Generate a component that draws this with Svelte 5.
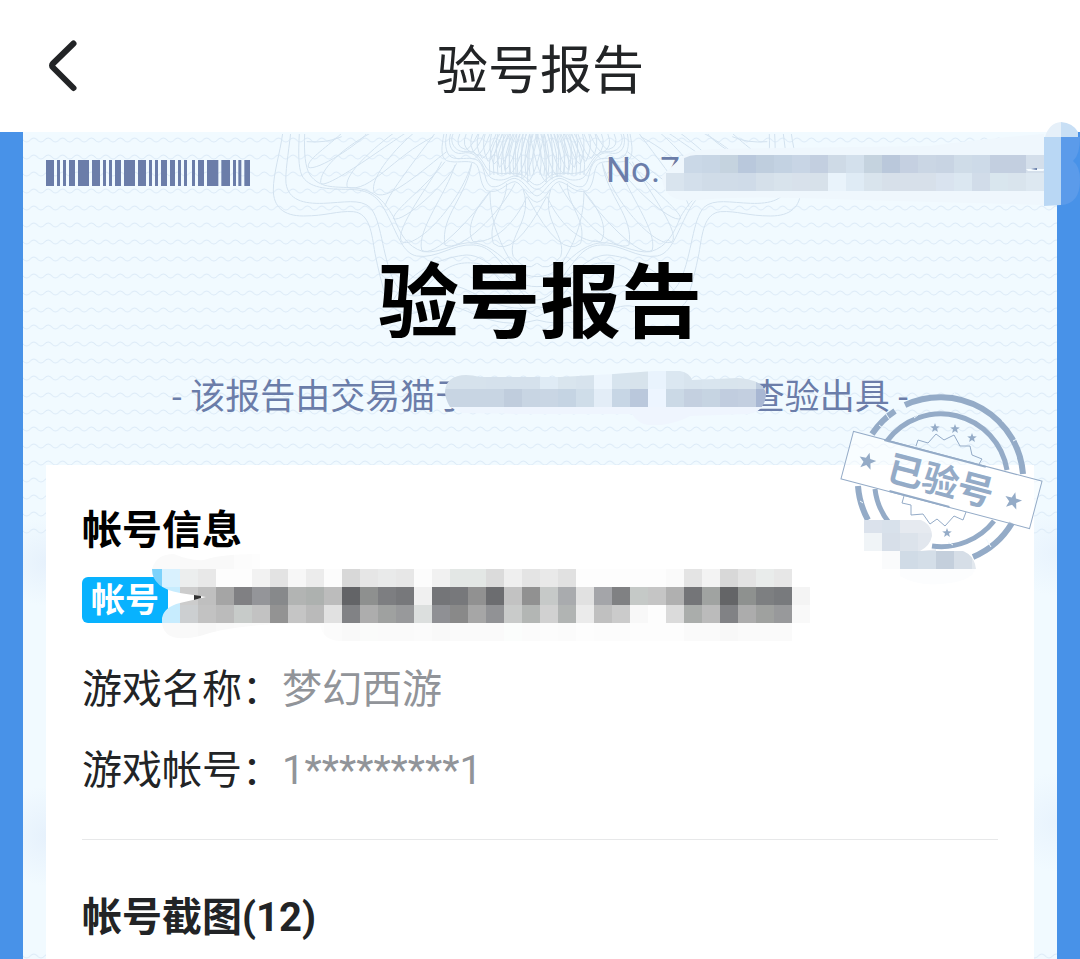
<script>
  const rows = [
    { label: '游戏名称：', value: '梦幻西游' },
    { label: '游戏帐号：', value: '1*********1' }
  ];
  const screenshotCount = 12;

  // [start, end] of each bar
  const bars = [
    [138, 162], [171, 180], [189, 198], [207, 225], [234, 267], [276, 300],
    [309, 318], [327, 336], [345, 363], [372, 405], [414, 438], [447, 456],
    [465, 474], [483, 501], [510, 525], [534, 543], [552, 561], [576, 585],
    [594, 612], [621, 655], [664, 690], [699, 708], [715, 724], [733, 750]
  ];

  // each mosaic row: first x, top y, height, then one colour per 18px cell
  const serialMosaic = [
    { x: 684, y: 155, h: 18, c: 'cad8e7 c8d6e5 c5d3df b9c8dc bfcede c3d2e2 c8d5e5 c3cfe0 cedae6 d3e0ec c5d3df bac8db c5d0e1 cad6e4 c8d4e3 cfdce8 cddae8 c3cfe0 c3cfe0 d4dfeb' },
    { x: 666, y: 173, h: 18, c: 'd9e4ee d3dfeb d0dce8 d0dce8 cfdbe8 d5e0ea d8e3ec d8e1eb d7e1ea e9f3fb dfebf5 d9e4ed d7e0ea d7e0ea d7e0ea d9e3ef dbe7f1 d1dce9 d9e6ee d9e4ed dde8f1' }
  ];
  const dateMosaic = [
    { x: 432, y: 371, h: 18, c: 'd6e2ec d6e2ec d6e2ec d5e1ec d5e1ec d5e1ec dfebf5 d9e5ee d7e3ed ecf5fd d7e4ee d7e3ec e9f3fd dbe7f1 d8e4ee d9e5ef d8e4ed d9e4ed c0cee0' },
    { x: 432, y: 389, h: 18, c: 'c8d5e3 c8d5e3 c8d5e3 c8d5e3 c0cddd c8d5e3 c9d6e4 c5d4e3 cfdde9 e3edf7 c7d6e5 bac8dc edf5ff cbd9e6 c4d0e0 c6d4e2 c1cddf c3cfe0 a8b7d3' },
    { x: 432, y: 407, h: 18, c: 'eff6fe eff6fe eff6fe eff6fe eff5fe eff5fe eff5fe eff5fe eff5fe eff5fe eff5fe eff5fe eff5fe eff5fe eff5fe eff5fe eff5fe eff5fe eff5fe' }
  ];
  const nameMosaic = [
    { x: 144, y: 551, h: 18, c: 'fafafa fafafa f9f9f9 f9f9f9 f9f9f9 fcfcfc fdfdfd' },
    { x: 144, y: 569, h: 18, c: '7cd2fb d9f1fe eceeee e8e8e8 fdfdfd fdfdfd f2f2f2 e3e3e3 f7f7f7 ececec fcfcfc d8d8d8 e6e6e6 e9eaea e7e7e7 fcfcfc f1f1f1 e3e7e5 e3e7e5 dbdbdb efefef e4e4e4 e9e9e9 e1e1e1 fdfdfd fdfdfd fdfdfd fdfdfd fdfdfd fafafa e4e4e4 f3f3f3 d8d8d8 e3e3e3 e9eceb e7e7e7' },
    { x: 162, y: 587, h: 18, c: 'c7ecfe cccccc bfbfbf a5a5a5 808083 949599 87898b b2b4b3 adb1af bcbcbc 636467 8e908f 7d7e81 77787b f0f0f0 747578 77787b 919191 6c6d70 c2c2c2 919191 c6c9c8 a9abae e1e1e1 a4a5a9 808183 c5c9c7 c5c5c5 b0b0b0 747578 a0a3a1 646567 8e918f 7d7f81 787a7d f4f4f4' },
    { x: 162, y: 605, h: 18, c: 'c7ecfe cccfd1 c2c2c2 bbbbbb c7cbc9 c2c2c2 939393 c5c5c5 bababa e1e1e1 818285 adadad 9fa1a0 98999b dcdfde 8f9094 898989 a6a6a6 919295 c9cbca b3b6b4 d1d1d1 b1b4b3 ebebeb c0c0c0 cbcbcb f8f8f8 fdfdfd dbdbdb aaadab bbbbbb 818285 acacac 9fa19f 98999b f9f9f9' },
    { x: 162, y: 623, h: 18, c: 'f9f9f9 f9f9f9 f7f7f7 f9f9f9 fafafa fbfbfb fcfcfc fdfdfd fdfdfd fbfbfb f9f9f9 fafbfa fafafa fafafa fbfbfb f9f9f9 fafafa fafafa fafafa fbfdfc fbfbfb fcfcfc fbfbfb fdfdfd fcfcfc fcfcfc fdfdfd fdfdfd fdfdfd fafafa fafafa f8f8f8 fafafa fafafa fafafa' }
  ];
  const stampMosaic = [
    { x: 864, y: 520, h: 13, c: 'dbe2ec d8e1eb e6eaf0 e6eaf0' },
    { x: 864, y: 533, h: 18, c: 'f0f4f7 d7dfe9 dce3eb e2e7ee' },
    { x: 882, y: 551, h: 18, c: 'fafbfc d0dbe6 d4dee8 c4cfdc d6dee7 e2e8ee' }
  ];

  const steps = (n) => Array.from({ length: n }, (_, i) => i);

  function star(cx, cy, r) {
    return steps(10)
      .map((i) => {
        const a = (i * Math.PI) / 5 - Math.PI / 2;
        const d = i % 2 ? r * 0.42 : r;
        return `${(cx + d * Math.cos(a)).toFixed(1)},${(cy + d * Math.sin(a)).toFixed(1)}`;
      })
      .join(' ');
  }
</script>

{#snippet mosaic(lines)}
  {#each lines as line}
    {#each line.c.split(' ') as color, i}
      <rect x={line.x + i * 18} y={line.y} width="18" height={line.h} fill={'#' + color} shape-rendering="crispEdges" />
    {/each}
  {/each}
{/snippet}

<div class="page">
  <header class="topbar">
    <button class="back" type="button" aria-label="返回">
      <svg width="32" height="54" viewBox="0 0 32 54" aria-hidden="true">
        <path d="M27.500 4.500 7 24.500Q5 26.500 7 28.500L27.500 49" />
      </svg>
    </button>
    <h1>验号报告</h1>
  </header>

  <main class="report">
    <svg class="paper" aria-hidden="true">
      <defs>
        <pattern id="waves" width="14.4" height="17" patternUnits="userSpaceOnUse">
          <path d="M-7.200 8Q-3.600 4 0 8T7.200 8T14.400 8T21.600 8" />
        </pattern>
        <clipPath id="below-edge"><rect x="-300" y="2" width="600" height="270" /></clipPath>
      </defs>
      <rect y="2" width="100%" height="404" fill="url(#waves)" />
      <rect y="812" width="100%" height="100%" fill="url(#waves)" />
      <svg x="50%" overflow="visible">
        <g clip-path="url(#below-edge)">
          <g class="rosette" transform="translate(-280 -12) scale(0.3333)">
            {#each ['', 'translate(1662 0) scale(-1 1)'] as flip}
              <g transform={flip}>
                <path d="M68 40C60 100 40 160 40 210S70 288 130 288C200 288 230 272 280 275C330 280 335 340 345 400C355 450 365 490 380 540C420 600 470 580 540 560S680 640 831 600" />
                <path d="M92 40C85 100 75 160 78 190C85 240 130 252 190 250C250 248 300 235 330 262C365 300 365 400 400 480C440 560 500 520 560 500S700 590 831 560" />
                <path d="M118 40C115 100 115 140 125 165C145 205 200 208 270 208C340 210 360 240 385 290C415 350 430 400 470 408C530 418 580 370 640 375C690 378 710 410 760 480Q790 540 831 540" />
                <path d="M134 40C132 100 135 140 150 165C180 205 220 200 270 203C340 205 370 240 400 290C420 340 440 380 490 395C540 402 590 365 640 368C700 376 730 420 770 450Q800 470 831 470" />
                <path d="M400 540C460 440 560 410 620 405C690 405 740 500 831 500" />
                <path d="M500 500C560 430 600 425 650 430C720 440 750 560 831 590" />
                <path d="M245 40C190 90 140 120 145 142C170 155 300 70 320 40" />
                <path d="M330 40C240 90 180 150 182 188C190 215 360 90 435 40" />
                <path d="M400 40C320 100 250 170 262 202C330 220 400 110 520 50" />
                <path d="M140 65Q200 70 245 50M460 40C390 100 330 180 342 215C370 260 500 140 560 95" />
                <path d="M525 40C450 140 380 230 375 260M555 125C500 200 400 270 400 296C430 310 560 190 590 130" />
                <path d="M545 125C520 180 400 330 425 365C470 390 600 250 635 130" />
                <path d="M585 135C560 220 470 330 485 390C520 420 640 290 690 215" />
                <path d="M635 130C620 230 540 290 555 375C600 400 720 280 765 190" />
                <path d="M690 215C630 280 620 340 640 365C720 370 780 280 800 230" />
                <path d="M740 190C740 260 680 300 700 370Q760 420 860 230M790 210C820 300 740 350 760 410Q800 460 830 430M690 215C690 300 720 380 770 450" />
                <path d="M552 40C545 80 540 110 560 122C590 132 620 118 645 130C665 145 655 190 680 212C720 225 740 185 765 185C790 190 800 240 831 247" />
                <path d="M560 40C552 80 560 108 580 114C610 120 630 108 655 122C680 145 670 190 695 200C725 205 740 175 765 175C795 180 810 225 831 228" />
                <path d="M572 40C560 80 580 104 605 100C640 92 650 110 665 130C685 170 690 178 715 180C740 182 750 168 765 168C800 170 810 208 831 208" />
                <path d="M580 40C565 70 590 98 615 94C650 90 665 120 680 145C695 165 740 160 765 160C800 160 810 195 831 195" />
                {#each steps(12) as i}
                  <path d="M{600 + i * 19} 40Q{582 + i * 20} 80 {616 + i * 17} {88 + i * 9}Q{630 + i * 18} {90 + i * 7} {655 + i * 18} 40" />
                  <path d="M{690 + i * 12} 165Q{680 + i * 12} 100 {720 + i * 10} 40" />
                {/each}
              </g>
            {/each}
          </g>
        </g>
      </svg>
    </svg>

    <div class="serial-row">
      <svg class="barcode" viewBox="138 480 612 78" aria-hidden="true">
        {#each bars as [from, to]}
          <rect x={from} y="480" width={to - from} height="78" />
        {/each}
      </svg>
      <div class="serial">
        No.7
        <svg class="smudge serial-smudge" viewBox="660 120 420 100" aria-hidden="true">
          <defs>
            <clipPath id="serial-shape">
              <path d="M666 173Q668 169 676 166Q684 155 696 155H1044V191H666Z" />
            </clipPath>
          </defs>
          <path d="M684 155Q694 150 712 149L930 146Q1000 137 1044 134V205L860 200Q740 195 700 200Q662 205 662 176Z" fill="#eff7fd" />
          <g clip-path="url(#serial-shape)">{@render mosaic(serialMosaic)}</g>
          <path d="M1026 169H1046L1043 171H1028Z" fill="#f5fbff" />
          <path d="M1031 169L1037 168V170Z" fill="#5e76a4" />
          <path d="M1044 137V206L1061 205V137Z" fill="#b9d7f4" />
          <path d="M1061 137H1080Q1080 155 1073 161Q1080 166 1080 180Q1080 204 1061 205Z" fill="#5b9bea" />
          <path d="M1045 137Q1049 123 1061 122V137Z" fill="#e6f0f9" />
          <path d="M1061 122Q1073 123 1078 132V137H1061Z" fill="#c8dff5" />
        </svg>
      </div>
    </div>

    <h2 class="title">验号报告</h2>

    <p class="issued">
      <span>- 该报告由交易猫于</span>
      <span>查验出具 -</span>
      <svg class="smudge date-smudge" viewBox="440 364 330 70" aria-hidden="true">
        <defs>
          <clipPath id="date-shape">
            <path d="M450 407Q440 390 450 380Q460 372 480 377L560 377L614 374Q640 372 655 371H680Q690 373 692 380L738 378Q766 380 766 396Q764 412 748 414L690 416Q680 422 662 425Q640 428 632 414H520L462 413Z" />
          </clipPath>
        </defs>
        <g clip-path="url(#date-shape)">{@render mosaic(dateMosaic)}</g>
      </svg>
    </p>

    <section class="card">
      <svg class="stamp" width="204" height="210" viewBox="840 380 204 210" aria-hidden="true">
        <g class="rings">
          <path d="M905 405A83 83 0 0 1 1023 474M1012 523A83 83 0 0 1 973 557M868 520A83 83 0 0 1 858 486M872 434A83 83 0 0 1 895 411" />
          <path class="thin" d="M887 441A67 67 0 0 1 1007 470M994 521A67 67 0 0 1 932 546M875 489A67 67 0 0 0 890 524" />
        </g>
        <path class="wear" d="M879 425L884 429M886 414L892 423M898 407L903 411M1002 421L1008 418M1013 441L1019 438M860 501L863 503M952 391L955 394M918 415L914 418M986 539L991 547M948 542L953 545" />
        <path class="frill" d="M916 446L918 440L928 443L936 434L944 440L954 435L960 446L970 446L972 455L982 459L979 464M904 496L902 503L911 505V515L923 514L930 524L937 519L945 526L954 516L963 520L966 512" />
        <polygon points={star(935, 428, 5)} />
        <polygon points={star(955, 429, 5)} />
        <polygon points={star(972, 438, 5)} />
        <polygon points={star(947, 533, 5)} />
        <g transform="rotate(14.8 941.500 480)">
          <rect class="banner" x="844" y="455.500" width="195" height="49" />
          <path class="band" d="M876 456H981M894 504H956" />
          <polygon points={star(865, 481, 9)} />
          <polygon points={star(1016, 482, 9)} />
          <text x="941" y="494" text-anchor="middle">已验号</text>
        </g>
      </svg>
      <svg class="smudge stamp-smudge" viewBox="860 512 120 76" aria-hidden="true">
        <defs>
          <clipPath id="stamp-shape">
            <path d="M864 520L905 517Q932 518 932 536Q930 546 920 551L948 548Q974 549 976 569H882V551H864Z" />
          </clipPath>
        </defs>
        <path d="M900 569H975Q972 580 950 583Q920 588 900 576Z" fill="#fcfdfe" />
        <g clip-path="url(#stamp-shape)">{@render mosaic(stampMosaic)}</g>
      </svg>

      <h3 class="account-title">帐号信息</h3>
      <div class="account">
        <span class="tag">帐号</span>
        <svg class="smudge name-smudge" viewBox="144 550 670 94" aria-hidden="true">
          <defs>
            <clipPath id="name-shape">
              <path d="M152 569Q156 554 174 554Q190 561 204 560Q220 554 260 554V569H792V587H810V623H792V641H342Q322 641 320 624Q240 622 200 636Q160 645 162 618Q164 607 180 603L206 597L180 593Q152 588 152 569Z" />
            </clipPath>
          </defs>
          <g clip-path="url(#name-shape)">{@render mosaic(nameMosaic)}</g>
          <path d="M194 595L201 596V598L194 600Z" fill="#333" />
        </svg>
      </div>

      <dl>
        {#each rows as row}
          <div class="row">
            <dt>{row.label}</dt>
            <dd>{row.value}</dd>
          </div>
        {/each}
      </dl>

      <h3 class="shots-title">帐号截图({screenshotCount})</h3>
    </section>
  </main>
</div>

<style>
  :global(body) {
    margin: 0;
    background: #4892e8;
  }

  .page {
    min-height: 100vh;
    display: flex;
    flex-direction: column;
    overflow-x: hidden;
    font-family: Roboto, "Noto Sans CJK SC", sans-serif;
    color: #222426;
  }

  h1, h2, h3, p, dl, dd {
    margin: 0;
  }

  .topbar {
    display: grid;
    grid-template-columns: 80px 1fr 80px;
    align-items: center;
    height: 132px;
    padding: 0 24px;
    box-sizing: border-box;
    background: #fff;
  }

  .topbar h1 {
    padding-top: 12px;
    text-align: center;
    font-size: 52px;
    line-height: 60px;
    font-weight: 400;
  }

  .back {
    display: flex;
    padding: 0 22px;
    border: none;
    background: none;
    cursor: pointer;
  }

  .back path {
    fill: none;
    stroke: #222426;
    stroke-width: 6;
    stroke-linecap: round;
  }

  .report {
    position: relative;
    flex: 1;
    display: flex;
    flex-direction: column;
    margin: 0 23px;
    padding: 28px 23px 0;
    background:
      radial-gradient(ellipse 50px 44px at 24px 430px, #e6f1fc, transparent),
      radial-gradient(ellipse 50px 50px at 24px 704px, #e6f1fc, transparent),
      radial-gradient(ellipse 50px 44px at 100% 420px, #e8f3fd, transparent),
      radial-gradient(ellipse 50px 50px at 100% 690px, #e8f3fd, transparent),
      #f1faff;
  }

  .paper {
    position: absolute;
    inset: 0;
    width: 100%;
    height: 100%;
  }

  .paper path {
    fill: none;
    stroke: #dceaf7;
    stroke-width: 1;
  }

  .paper .rosette path {
    stroke: #d3e2ef;
    stroke-width: 3;
  }

  .serial-row {
    position: relative;
    z-index: 1;
    display: flex;
    justify-content: space-between;
    height: 26px;
  }

  .barcode {
    width: 204px;
    height: 26px;
    fill: #6b7da9;
  }

  .serial {
    position: relative;
    width: 428px;
    font-size: 35px;
    line-height: 22px;
    color: #6b7da9;
  }

  .smudge {
    position: absolute;
    pointer-events: none;
  }

  .serial-smudge {
    top: -40px;
    right: -46px;
    width: 420px;
    height: 100px;
  }

  .title {
    position: relative;
    margin-top: 68px;
    text-align: center;
    font-size: 81px;
    line-height: 100px;
    font-weight: 700;
    color: #000;
  }

  .issued {
    position: relative;
    align-self: center;
    display: flex;
    justify-content: space-between;
    width: 736px;
    margin-top: 20px;
    font-size: 35px;
    line-height: 48px;
    color: #6b7da9;
  }

  .date-smudge {
    top: -10px;
    left: 268px;
    width: 330px;
    height: 70px;
  }

  .card {
    position: relative;
    flex: 1;
    margin-top: 43px;
    padding: 42px 36px 17px;
    background: #fff;
  }

  .stamp {
    position: absolute;
    top: -85px;
    right: -10px;
    fill: #94abc7;
  }

  .rings path {
    fill: none;
    stroke: #94abc7;
    stroke-width: 6;
  }

  .rings .thin {
    stroke-width: 5;
  }

  .wear {
    stroke: #f1faff;
    stroke-width: 1;
  }

  .frill {
    fill: none;
    stroke: #94abc7;
    stroke-width: 1;
  }

  .banner {
    fill: #fff;
    fill-opacity: 0.5;
    stroke: #94abc7;
    stroke-width: 1;
  }

  .band {
    stroke: #94abc7;
    stroke-width: 2;
  }

  .stamp text {
    font-size: 36px;
    font-weight: 700;
  }

  .stamp-smudge {
    top: 47px;
    right: 54px;
    width: 120px;
    height: 76px;
  }

  .account-title,
  .shots-title {
    font-size: 40px;
    line-height: 48px;
    font-weight: 700;
  }

  .account-title {
    color: #000;
  }

  .account {
    position: relative;
    display: flex;
    margin-top: 22px;
  }

  .tag {
    width: 86px;
    border-radius: 6px;
    background: #08b2fe;
    color: #fff;
    font-size: 34px;
    line-height: 46px;
    font-weight: 700;
    text-align: center;
  }

  .name-smudge {
    top: -27px;
    left: 62px;
    width: 670px;
    height: 94px;
  }

  dl {
    display: grid;
    gap: 33px;
    margin-top: 43px;
    padding-bottom: 44px;
    border-bottom: 1px solid #e7e8e9;
  }

  .row {
    display: flex;
    font-size: 40px;
    line-height: 48px;
  }

  .row dd {
    color: #919499;
  }

  .shots-title {
    margin-top: 54px;
  }
</style>
